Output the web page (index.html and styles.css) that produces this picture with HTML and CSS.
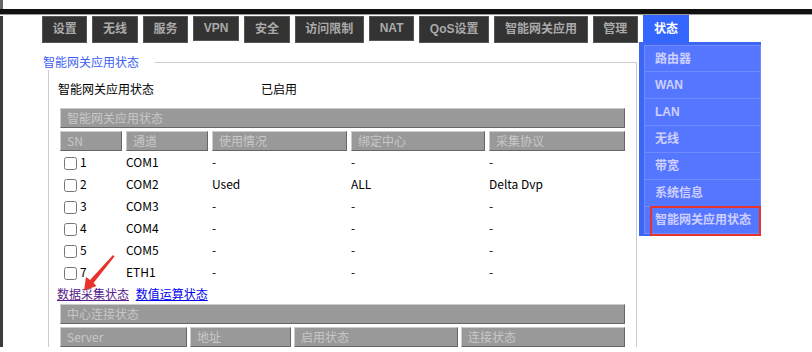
FILE: index.html
```html
<!DOCTYPE html>
<html lang="zh-CN">
<head>
    <meta charset="UTF-8">
    <meta name="viewport" content="width=device-width, initial-scale=1.0">
    <title>智能网关应用状态</title>
    <link rel="stylesheet" href="styles.css">
</head>
<body>

    <div class="window-top"></div>
    <div class="window-rule"></div>

    <div class="frame">
        <ul class="tabs">
            <li class="tab">设置</li>
            <li class="tab">无线</li>
            <li class="tab">服务</li>
            <li class="tab latin">VPN</li>
            <li class="tab">安全</li>
            <li class="tab">访问限制</li>
            <li class="tab latin">NAT</li>
            <li class="tab">QoS设置</li>
            <li class="tab">智能网关应用</li>
            <li class="tab">管理</li>
            <li class="tab active">状态
                <ul class="dropdown">
                    <li>路由器</li>
                    <li>WAN</li>
                    <li>LAN</li>
                    <li>无线</li>
                    <li>带宽</li>
                    <li>系统信息</li>
                    <li class="marked">智能网关应用状态</li>
                </ul>
            </li>
        </ul>

        <div class="panel">
            <div class="panel-title"><span>智能网关应用状态</span></div>
            <div class="panel-body">
                <div class="status-row">
                    <span class="label">智能网关应用状态</span>
                    <span>已启用</span>
                </div>

                <div class="grid grid-app">
                    <div class="bar">智能网关应用状态</div>
                    <div class="th">SN</div>
                    <div class="th">通道</div>
                    <div class="th">使用情况</div>
                    <div class="th">绑定中心</div>
                    <div class="th">采集协议</div>

                    <div class="td"><input type="checkbox">1</div>
                    <div class="td">COM1</div><div class="td">-</div><div class="td">-</div><div class="td">-</div>
                    <div class="td"><input type="checkbox">2</div>
                    <div class="td">COM2</div><div class="td">Used</div><div class="td">ALL</div><div class="td">Delta Dvp</div>
                    <div class="td"><input type="checkbox">3</div>
                    <div class="td">COM3</div><div class="td">-</div><div class="td">-</div><div class="td">-</div>
                    <div class="td"><input type="checkbox">4</div>
                    <div class="td">COM4</div><div class="td">-</div><div class="td">-</div><div class="td">-</div>
                    <div class="td"><input type="checkbox">5</div>
                    <div class="td">COM5</div><div class="td">-</div><div class="td">-</div><div class="td">-</div>
                    <div class="td"><input type="checkbox">7</div>
                    <div class="td">ETH1</div><div class="td">-</div><div class="td">-</div><div class="td">-</div>
                </div>

                <div class="links">
                    <a href="#" class="visited">数据采集状态</a>
                    <a href="#">数值运算状态</a>
                    <svg class="arrow" viewBox="0 0 40 42" xmlns="http://www.w3.org/2000/svg">
                        <polygon points="33,3 34.5,4.5 13.5,31 16.5,34 4,38.5 6,25 10,28" fill="#e8322c"/>
                    </svg>
                </div>

                <div class="grid grid-center">
                    <div class="bar">中心连接状态</div>
                    <div class="th">Server</div>
                    <div class="th">地址</div>
                    <div class="th">启用状态</div>
                    <div class="th">连接状态</div>
                </div>
            </div>
        </div>
    </div>

</body>
</html>
```

FILE: styles.css
```css
/* --- Page --- */
body {
    margin: 0;
    background: #fff;
    font-family: "Noto Sans CJK SC", "Liberation Sans", sans-serif;
    font-size: 12px;
    color: #000;
    overflow: hidden;
}

.window-top {
    height: 9px;
    border-left: 3px solid #666;
}
.window-rule {
    height: 5px;
    background: #111;
    border-bottom: 1px solid #999;
}

.frame {
    border-left: 3px solid #3c3c3c;
}

/* --- Tabs --- */
.tabs {
    list-style: none;
    margin: 1px 0 0 0;
    padding: 0 0 0 39px;
    display: flex;
    align-items: flex-start;
    gap: 5px;
}
.tab {
    height: 27px;
    box-sizing: border-box;
    padding: 0 9.7px;
    background: #333;
    border: 1px solid #555;
    color: #aaa;
    font-family: "Liberation Sans", "Noto Sans CJK SC", sans-serif;
    font-weight: bold;
    font-size: 12px;
    line-height: 25px;
    white-space: nowrap;
}
.tab.latin { height: 25px; line-height: 23px; }
.tab.active {
    position: relative;
    height: 28px;
    margin-top: -1px;
    padding: 0 10px;
    background: #3366ff;
    border-color: #3366ff;
    color: #fff;
    line-height: 27px;
}

.dropdown {
    position: absolute;
    top: 100%;
    left: -5px;
    width: 117px;
    margin: 0;
    padding: 3px 0 2px 5px;
    list-style: none;
    background: #3d66f5;
    z-index: 10;
}
.dropdown li {
    height: 27px;
    box-sizing: border-box;
    padding-left: 10px;
    background: #5577ff;
    border: 1px solid #6e8cff;
    border-top: none;
    color: #cfcfff;
    line-height: 26px;
}
.dropdown li:first-child { border-top: 1px solid #6e8cff; }
.dropdown li.marked { position: relative; }
.dropdown li.marked::after {
    content: '';
    position: absolute;
    left: 5px; right: -1px; top: -1px; bottom: -3px;
    border: 2px solid #e8322c;
}

/* --- Panel --- */
.panel {
    margin: 11px 0 0 40px;
    width: 594px;
}
.panel-title {
    display: flex;
    height: 16px;
    color: #3d5ef5;
    line-height: 16px;
}
.panel-title::after {
    content: '';
    flex: 1;
    margin: 8px 0 0 16px;
    border-top: 1px solid #ccc;
    border-right: 1px solid #ccc;
}
.panel-body {
    margin-left: 5px;
    border-left: 1px solid #ccc;
    border-right: 1px solid #ccc;
}

.status-row {
    display: flex;
    height: 18px;
    line-height: 18px;
    padding: 10px 0 0 9px;
}
.status-row .label { width: 203px; }

/* --- Grids --- */
.grid {
    display: grid;
    margin: 10px 11px 0 11px;
}
.grid-app {
    grid-template-columns: 62px 82px 135px 134px 136px;
    column-gap: 4px;
}
.grid-center {
    margin-top: 1px;
    grid-template-columns: 127px 101px 164px 164px;
    column-gap: 3px;
}

.bar, .th {
    height: 20px;
    box-sizing: border-box;
    background: #999;
    border: 1px solid;
    border-color: #ccc #666 #666 #ccc;
    color: #c8c8c8;
    line-height: 18px;
    padding-left: 6px;
    white-space: nowrap;
    overflow: hidden;
}
.bar {
    grid-column: 1 / -1;
    margin-bottom: 3px;
}

.td {
    height: 22px;
    display: flex;
    align-items: center;
    line-height: 22px;
}
.td input {
    margin: 3px 3px 1px 4px;
}

/* --- Links --- */
.links {
    position: relative;
    height: 18px;
    line-height: 18px;
    padding: 2px 0 0 8px;
}
.links a { color: #0000ee; margin-right: 4px; }
.links a.visited { color: #551a8b; }

.arrow {
    position: absolute;
    left: 31px;
    top: -31px;
    width: 40px;
    height: 42px;
}
```
